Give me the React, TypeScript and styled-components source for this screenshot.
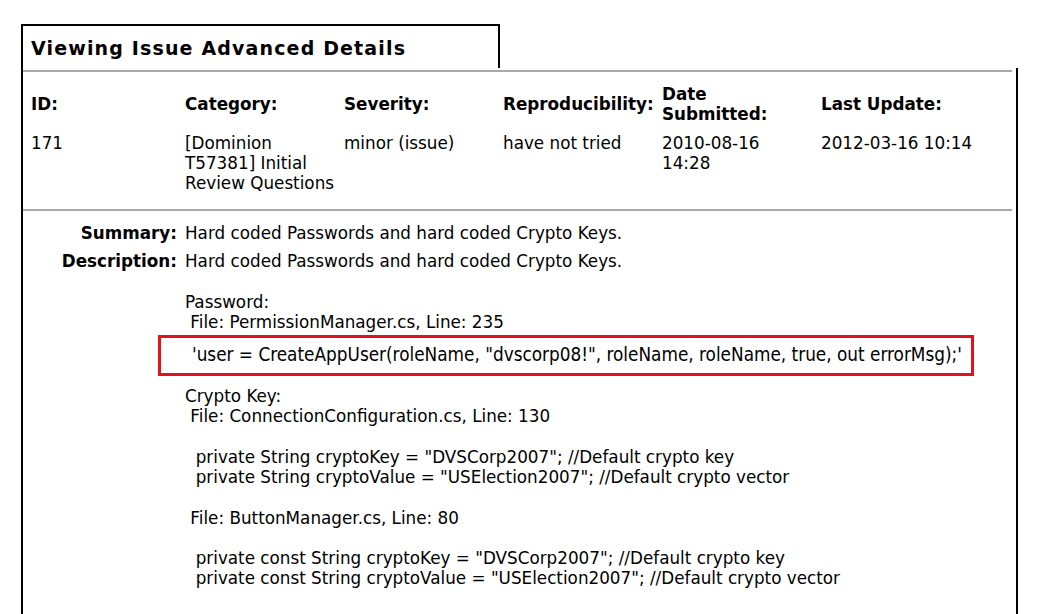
import React from 'react';
import styled, { createGlobalStyle } from 'styled-components';

const GlobalStyle = createGlobalStyle`
    html, body {
        margin: 0;
        padding: 0;
        background: #fff;
    }
    body {
        font-family: "DejaVu Sans", Verdana, sans-serif;
        color: #000;
        overflow: hidden;
    }
`

const Frame = styled.div`
    width: 995px;
    height: 590px;
    margin: 24px 0 0 21px;
    border-left: 2px solid #000;
    display: flex;
    flex-direction: column;
`

const TitleTab = styled.div`
    width: 467px;
    height: 41px;
    margin-left: -2px;
    padding: 1px 0 0 8px;
    box-sizing: content-box;
    border-top: 2px solid #000;
    border-right: 2px solid #000;
    border-left: 2px solid #000;
    display: flex;
    align-items: center;
`

const Title = styled.h1`
    margin: 0;
    font-size: 19px;
    font-weight: 700;
    letter-spacing: 1.15px;
`

const Panel = styled.div`
    flex: 1;
    border-right: 2px solid #000;
    padding-top: 2px;
`

const Rule = styled.div`
    height: 2px;
    margin-right: 4px;
    background: #aaa;
`

const InfoTable = styled.div`
    display: grid;
    grid-template-columns: 154px 159px 159px 159px 159px 1fr;
    row-gap: 9px;
    padding: 12px 0 16px 8px;
    font-size: 16.8px;
    line-height: 20px;
`

const HeadCell = styled.div`
    font-weight: 700;
    align-self: center;
`

const Cell = styled.div`
    padding-right: 6px;
`

const Fields = styled.div`
    display: grid;
    grid-template-columns: 154px 1fr;
    column-gap: 8px;
    row-gap: 8px;
    padding-top: 12px;
    font-size: 16.8px;
    line-height: 20px;
`

const Label = styled.div`
    font-weight: 700;
    text-align: right;
`

const Value = styled.div`
    white-space: pre;
`

const TextBlock = styled.div`
    white-space: pre;
    line-height: 20.25px;
`

const Highlight = styled.div`
    width: 779px;
    margin: 3px 0 10px -27px;
    padding: 7px 0 8px 31px;
    border: 3px solid #e3131e;
    font-family: "DejaVu Sans Condensed", "Liberation Sans", Arial, sans-serif;
    font-size: 18.8px;
    line-height: 20px;
    white-space: pre;
`

const headers = ['ID:', 'Category:', 'Severity:', 'Reproducibility:', 'Date\nSubmitted:', 'Last Update:']
const values = ['171', '[Dominion\nT57381] Initial\nReview Questions', 'minor (issue)', 'have not tried', '2010-08-16\n14:28', '2012-03-16 10:14']

const passwordText = `Hard coded Passwords and hard coded Crypto Keys.

Password:
 File: PermissionManager.cs, Line: 235`

const cryptoText = `Crypto Key:
 File: ConnectionConfiguration.cs, Line: 130

  private String cryptoKey = "DVSCorp2007"; //Default crypto key
  private String cryptoValue = "USElection2007"; //Default crypto vector

 File: ButtonManager.cs, Line: 80

  private const String cryptoKey = "DVSCorp2007"; //Default crypto key
  private const String cryptoValue = "USElection2007"; //Default crypto vector`

const renderLines = (text: string) =>
    text.split('\n').map((line, i, arr) => (
        <React.Fragment key={i}>
            {line}
            {i < arr.length - 1 && <br />}
        </React.Fragment>
    ))

export default function App() {
    return (
        <>
            <GlobalStyle />
            <Frame>
                <TitleTab>
                    <Title>Viewing Issue Advanced Details</Title>
                </TitleTab>
                <Panel>
                    <Rule />
                    <InfoTable>
                        {headers.map((h) => (
                            <HeadCell key={h}>{renderLines(h)}</HeadCell>
                        ))}
                        {values.map((v) => (
                            <Cell key={v}>{renderLines(v)}</Cell>
                        ))}
                    </InfoTable>
                    <Rule />
                    <Fields>
                        <Label>Summary:</Label>
                        <Value>Hard coded Passwords and hard coded Crypto Keys.</Value>
                        <Label>Description:</Label>
                        <Value>
                            <TextBlock>{passwordText}</TextBlock>
                            <Highlight>{`'user = CreateAppUser(roleName, "dvscorp08!", roleName, roleName, true, out errorMsg);'`}</Highlight>
                            <TextBlock>{cryptoText}</TextBlock>
                        </Value>
                    </Fields>
                </Panel>
            </Frame>
        </>
    )
}
